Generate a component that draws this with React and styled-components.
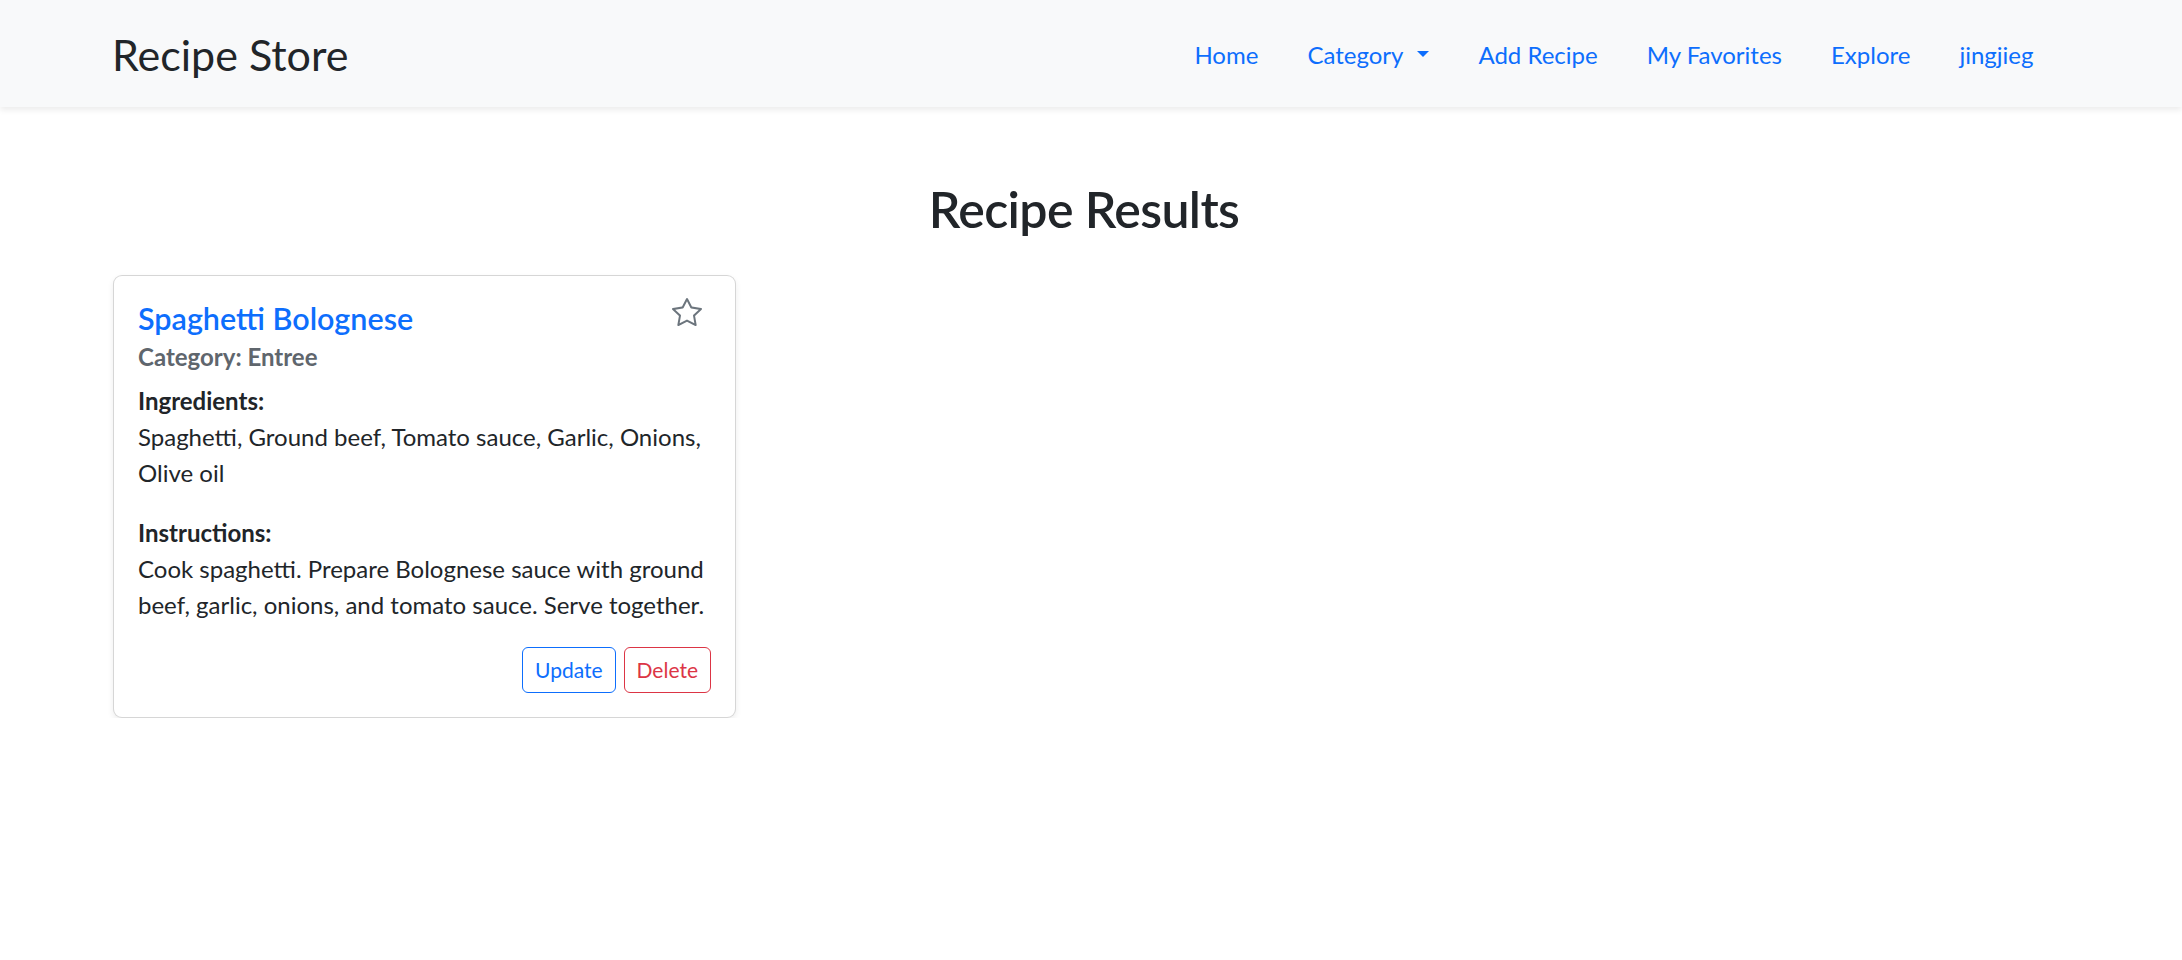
import React from 'react';
import styled, { createGlobalStyle, css } from 'styled-components';

const GlobalStyle = createGlobalStyle`
  body {
    margin: 0;
    background: #fff;
    color: #212529;
    font-family: Lato, "Liberation Sans", sans-serif;
  }
`;

const Navbar = styled.nav`
  position: relative;
  z-index: 1;
  display: flex;
  align-items: center;
  justify-content: space-between;
  box-sizing: border-box;
  height: 107px;
  padding: 3px 124px 0 112px;
  background: #f8f9fa;
  box-shadow: 0 3px 6px rgba(0, 0, 0, 0.08);
`;

const Brand = styled.a`
  font-size: 43px;
  line-height: 1.2;
  color: #212529;
  text-decoration: none;
`;

const NavList = styled.ul`
  display: flex;
  margin: 0;
  padding: 0;
  list-style: none;
`;

const NavLink = styled.a`
  display: flex;
  align-items: center;
  padding: 0 24.5px;
  font-size: 24px;
  line-height: 1.5;
  color: #0d6efd;
  text-decoration: none;

  ${(p) =>
    p.$dropdown &&
    css`
      &::after {
        content: '';
        margin-left: 14px;
        transform: translateY(-1px);
        border-top: 6.5px solid currentColor;
        border-left: 6.5px solid transparent;
        border-right: 6.5px solid transparent;
      }
    `}
`;

const Main = styled.main`
  padding: 0 127px 0 113px;
`;

const PageTitle = styled.h2`
  margin: 72px 0 36px;
  font-size: 50px;
  font-weight: 600;
  letter-spacing: -0.6px;
  line-height: 1.2;
  text-align: center;
`;

const CardGrid = styled.div`
  display: grid;
  grid-template-columns: repeat(auto-fill, 623px);
  gap: 36px;
`;

const Card = styled.div`
  box-sizing: border-box;
  padding: 24px;
  border: 1px solid rgba(0, 0, 0, 0.16);
  border-radius: 9px;
  background: #fff;
  box-shadow: 0 3px 6px rgba(0, 0, 0, 0.075);
`;

const CardHeader = styled.div`
  display: flex;
  align-items: flex-start;
  justify-content: space-between;
`;

const CardTitle = styled.h5`
  margin: 0 0 6px;
  font-size: 30.5px;
  font-weight: 600;
  line-height: 1.2;
  color: #0d6efd;
`;

const StarButton = styled.button`
  display: flex;
  margin: -3px 9px 0 0;
  padding: 0;
  border: 0;
  background: none;
  color: #6c757d;
  cursor: pointer;

  svg {
    width: 30px;
    height: 30px;
  }
`;

const CardSubtitle = styled.h6`
  margin: 0 0 12px;
  font-size: 24px;
  font-weight: 700;
  line-height: 1.2;
  color: #5f666d;
`;

const CardText = styled.p`
  margin: 0 0 24px;
  font-size: 24px;
  line-height: 1.5;

  strong {
    font-weight: 700;
  }
`;

const Actions = styled.div`
  display: flex;
  justify-content: flex-end;
  gap: 8px;
`;

const OutlineButton = styled.button`
  padding: 6px 12px;
  border: 1px solid ${(p) => p.$color};
  border-radius: 6px;
  background: transparent;
  color: ${(p) => p.$color};
  font-family: inherit;
  font-size: 21px;
  line-height: 1.5;
  cursor: pointer;
`;

const StarIcon = () => (
  <svg viewBox="0 0 16 16" fill="currentColor">
    <path d="M2.866 14.85c-.078.444.36.791.746.593l4.39-2.256 4.389 2.256c.386.198.824-.149.746-.592l-.83-4.73 3.522-3.356c.33-.314.16-.888-.282-.95l-4.898-.696L8.465.792a.513.513 0 0 0-.927 0L5.354 5.12l-4.898.696c-.441.062-.612.636-.283.95l3.523 3.356-.83 4.73zm4.905-2.767-3.686 1.894.694-3.957a.56.56 0 0 0-.163-.505L1.71 6.745l4.052-.576a.53.53 0 0 0 .393-.288L8 2.223l1.847 3.658a.53.53 0 0 0 .393.288l4.052.575-2.906 2.770a.56.56 0 0 0-.163.506l.694 3.957-3.686-1.894a.5.5 0 0 0-.461 0z" />
  </svg>
);

const recipes = [
  {
    name: 'Spaghetti Bolognese',
    category: 'Entree',
    ingredients: 'Spaghetti, Ground beef, Tomato sauce, Garlic, Onions, Olive oil',
    instructions:
      'Cook spaghetti. Prepare Bolognese sauce with ground beef, garlic, onions, and tomato sauce. Serve together.',
  },
];

const links = ['Home', 'Category', 'Add Recipe', 'My Favorites', 'Explore', 'jingjieg'];

const App = () => (
  <>
    <GlobalStyle />
    <Navbar>
      <Brand href="#">Recipe Store</Brand>
      <NavList>
        {links.map((link) => (
          <li key={link}>
            <NavLink href="#" $dropdown={link === 'Category'}>
              {link}
            </NavLink>
          </li>
        ))}
      </NavList>
    </Navbar>

    <Main>
      <PageTitle>Recipe Results</PageTitle>
      <CardGrid>
        {recipes.map((recipe) => (
          <Card key={recipe.name}>
            <CardHeader>
              <CardTitle>{recipe.name}</CardTitle>
              <StarButton aria-label="Add to favorites">
                <StarIcon />
              </StarButton>
            </CardHeader>
            <CardSubtitle>Category: {recipe.category}</CardSubtitle>
            <CardText>
              <strong>Ingredients:</strong>
              <br />
              {recipe.ingredients}
            </CardText>
            <CardText>
              <strong>Instructions:</strong>
              <br />
              {recipe.instructions}
            </CardText>
            <Actions>
              <OutlineButton $color="#0d6efd">Update</OutlineButton>
              <OutlineButton $color="#dc3545">Delete</OutlineButton>
            </Actions>
          </Card>
        ))}
      </CardGrid>
    </Main>
  </>
);

export default App;
